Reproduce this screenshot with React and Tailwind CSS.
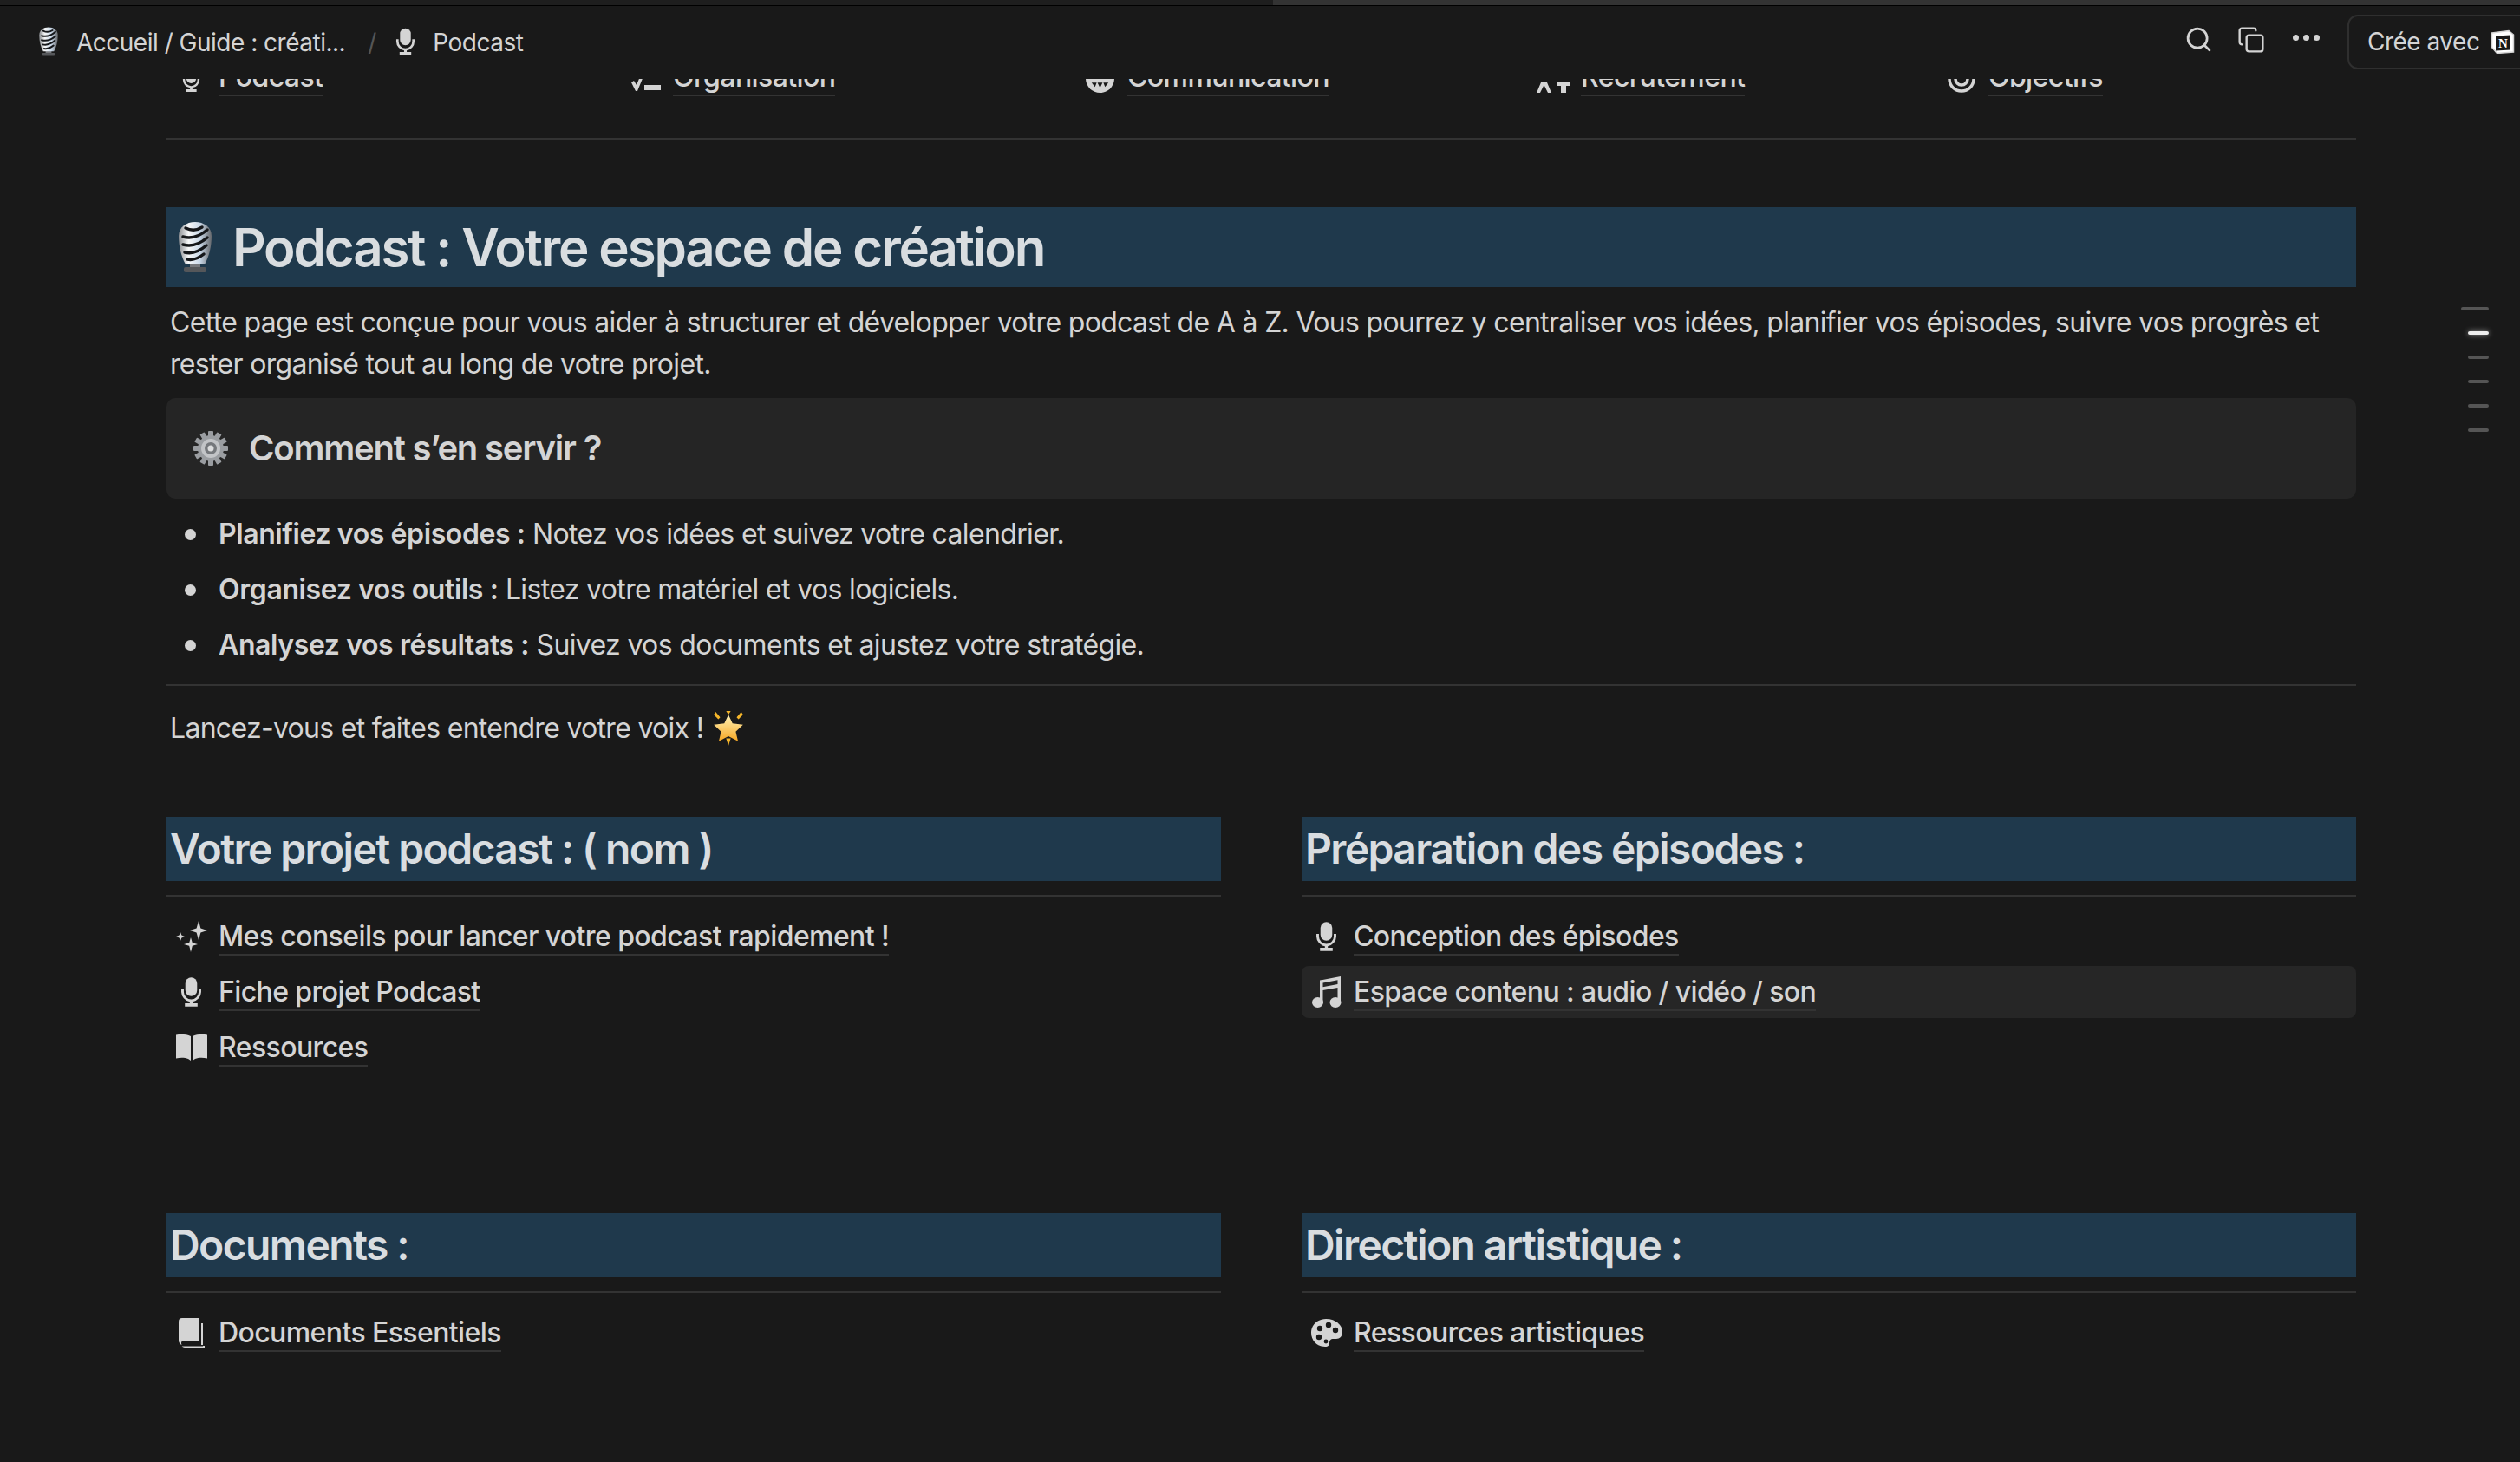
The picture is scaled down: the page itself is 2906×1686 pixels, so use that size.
import { Search, Copy } from 'lucide-react';

const MicIcon = ({ className }) => (
  <svg viewBox="0 0 24 32" className={className} fill="currentColor">
    <rect x="5.500" y="0" width="13" height="20.500" rx="6.500" />
    <path d="M1 13h2.800v3a8.200 8.200 0 0 0 16.400 0v-3H23v3a11 11 0 0 1-9.400 10.700V28.500H19V32H5v-3.500h5.400v-1.800A11 11 0 0 1 1 16z" />
  </svg>
);

const SparkIcon = ({ className }) => (
  <svg viewBox="0 0 36 36" className={className} fill="currentColor">
    <path d="M26 0l2.400 8.600L36 11l-7.600 2.400L26 22l-2.400-8.600L16 11l7.600-2.400z" />
    <path d="M5 13l1.400 3.600L10 18l-3.600 1.400L5 23l-1.400-3.600L0 18l3.600-1.400z" />
    <path d="M17 19l1.800 6.200L25 27l-6.200 1.800L17 36l-1.800-7.200L9 27l6.200-1.800z" />
  </svg>
);

const BookIcon = ({ className }) => (
  <svg viewBox="0 0 36 32" className={className} fill="currentColor">
    <path d="M0 1.500C5 0 12 .5 17 3v28l-3-2c-4-1.500-9-1.500-14-.5z" />
    <path d="M36 1.500C31 0 24 .5 19 3v28l3-2c4-1.500 9-1.500 14-.5z" />
  </svg>
);

const MusicIcon = ({ className }) => (
  <svg viewBox="0 0 34 36" className={className} fill="currentColor">
    <path d="M9 4.500 33 0v29h-3.500V13L12.500 16v15H9zM12.500 7.500v4.800L29.500 9V4.300z" fillRule="evenodd" />
    <ellipse cx="6.500" cy="30" rx="6.500" ry="6" />
    <ellipse cx="27" cy="30" rx="6.500" ry="6" />
  </svg>
);

const DocsIcon = ({ className }) => (
  <svg viewBox="0 0 30 34" className={className} fill="currentColor">
    <path d="M0 4a4 4 0 0 1 4-4h19v26H6a3 3 0 0 0-3 3c0 .8.200 1.500.600 2A6 6 0 0 1 0 26z" />
    <path d="M26 6h2v26h2v2H7a5 5 0 0 1-3.400-1.500H28V31H26z" />
  </svg>
);

const PaletteIcon = ({ className }) => (
  <svg viewBox="0 0 36 32" className={className}>
    <path d="M17 0C7 0 0 7 0 16s7 16 16 16c4 0 5-2 5-4 0-3 1-5 5-5h3c4 0 7-3 7-8C36 7 28 0 17 0z" fill="currentColor" />
    <circle cx="10" cy="11" r="3.200" fill="#191919" />
    <circle cx="20" cy="7" r="3.200" fill="#191919" />
    <circle cx="28" cy="13" r="3.200" fill="#191919" />
    <circle cx="9" cy="21" r="3.200" fill="#191919" />
    <circle cx="17" cy="26" r="2.400" fill="#191919" />
  </svg>
);

const ChecklistIcon = ({ className }) => (
  <svg viewBox="0 0 34 26" className={className} fill="currentColor">
    <path d="M0 14l3-2 3 5 5-12 3 2-7 17H5z" />
    <rect x="15" y="17" width="19" height="6" />
  </svg>
);

const GlobeIcon = ({ className }) => (
  <svg viewBox="0 0 34 34" className={className}>
    <circle cx="17" cy="17" r="17" fill="currentColor" />
    <path d="M7 22h6l-2 5zM14 22h6l-3 6zM21 22h6l-4 5z" fill="#191919" />
  </svg>
);

const PeopleIcon = ({ className }) => (
  <svg viewBox="0 0 40 34" className={className} fill="currentColor">
    <path d="M5 22h7l5 12h-4l-4.500-9L4 34H0z" />
    <path d="M24 22h14v4h-4v8h-6v-8h-4z" />
  </svg>
);

const TargetIcon = ({ className }) => (
  <svg viewBox="0 0 32 32" className={className} fill="none" stroke="currentColor" strokeWidth="3.500">
    <circle cx="16" cy="16" r="14" />
    <circle cx="16" cy="16" r="7" />
  </svg>
);

const NotionLogo = ({ className }) => (
  <svg viewBox="0 0 28 28" className={className}>
    <path d="M1.500 4 21 1.500 26.500 6v20l-19 1.500-6-7z" fill="#fff" stroke="#d4d4d4" strokeWidth="1.500" />
    <path d="M6 7.500 23 6.500V23.500L6 24.500z" fill="#191919" />
    <text x="14.500" y="21" textAnchor="middle" fontSize="15" fontWeight="700" fontFamily="Liberation Serif, serif" fill="#fff">N</text>
  </svg>
);

const MicEmoji = ({ className }) => (
  <svg viewBox="0 0 42 60" className={className}>
    <defs>
      <linearGradient id="metal" x1="0" x2="1" y1="0" y2="0">
        <stop offset="0" stopColor="#8a8d91" />
        <stop offset="0.3" stopColor="#f7f8f9" />
        <stop offset="0.65" stopColor="#c9d8e8" />
        <stop offset="1" stopColor="#64676b" />
      </linearGradient>
    </defs>
    <rect x="15" y="48" width="12" height="6" fill="#77797d" />
    <rect x="8" y="53" width="26" height="6" rx="2" fill="#55575a" />
    <path d="M21 1C31 1 40 7 40 17c0 12-3 24-8 33H10C5 41 2 29 2 17 2 7 11 1 21 1z" fill="url(#metal)" />
    <path d="M10 8q10 5 19-1M7 18q14 4 28-8M7 27q14 4 28-8M9 36q12 3 25-8M12 44q9 2 19-6" stroke="#15171a" strokeWidth="3.500" fill="none" strokeLinecap="round" />
  </svg>
);

const GearEmoji = ({ className }) => (
  <svg viewBox="0 0 40 40" className={className}>
    <g fill="#9a9da1">
      <circle cx="20" cy="20" r="15" />
      {[0, 30, 60, 90, 120, 150].map(a => (
        <rect key={a} x="17" y="0" width="6" height="40" rx="1" transform={`rotate(${a} 20 20)`} />
      ))}
    </g>
    <circle cx="20" cy="20" r="11" fill="#c2c4c7" />
    <circle cx="20" cy="20" r="7" fill="#75787c" />
    <circle cx="20" cy="20" r="3.500" fill="#dcddde" />
  </svg>
);

const StarEmoji = ({ className }) => (
  <svg viewBox="0 0 36 38" className={className}>
    <defs>
      <linearGradient id="star" x1="0" x2="0" y1="0" y2="1">
        <stop offset="0" stopColor="#fff3b8" />
        <stop offset="1" stopColor="#f6a723" />
      </linearGradient>
    </defs>
    <path d="M18 4l4.500 9.500L34 15l-8 7.500L28.500 33 18 27.500 7.500 33 10 22.500 2 15l11.500-1.500z" fill="url(#star)" />
    <path d="M4 1l5 6-2 2-5-5zM32 1l-5 6 2 2 5-5zM15.500 30h5L18 38z" fill="#f5b62a" />
    <path d="M15.500 0h5L18 4z" fill="#f5b62a" />
  </svg>
);

function Header() {
  return (
    <div className="flex items-center h-[82px] shrink-0 pl-[43px] text-[#d4d4d4]">
      <MicEmoji className="w-[26px] h-[34px]" />
      <span className="ml-[19px] mt-[2px] text-[28px] tracking-[-0.5px]">Accueil / Guide : créati...</span>
      <span className="ml-[26px] mt-[2px] text-[28px] text-[#555]">/</span>
      <MicIcon className="ml-[22px] w-[23px] h-[32px]" />
      <span className="ml-[20px] mt-[2px] text-[28px] tracking-[-0.5px]">Podcast</span>
      <div className="ml-auto flex items-center">
        <Search className="w-[33px] h-[33px] -mt-[6px]" strokeWidth={2} />
        <Copy className="ml-[28px] w-[32px] h-[32px] -mt-[4px]" strokeWidth={1.8} />
        <div className="ml-[32px] -mt-[10px] flex gap-[5px]">
          <span className="w-[7px] h-[7px] rounded-full bg-[#d4d4d4]" />
          <span className="w-[7px] h-[7px] rounded-full bg-[#d4d4d4]" />
          <span className="w-[7px] h-[7px] rounded-full bg-[#d4d4d4]" />
        </div>
        <div className="ml-[32px] -mr-[20px] flex items-center gap-[13px] w-[219px] h-[63px] pl-[21px] rounded-[12px] border-2 border-[#2f2f2f]">
          <span className="text-[28px] tracking-[-0.5px] whitespace-nowrap">Crée avec</span>
          <NotionLogo className="w-[28px] h-[28px] shrink-0" />
        </div>
      </div>
    </div>
  );
}

const TOP_LINKS = [
  { label: 'Podcast', Icon: MicIcon, icon: 'w-[21px] h-[30px]', width: 'w-[524px]' },
  { label: 'Organisation', Icon: ChecklistIcon, icon: 'w-[34px] h-[26px]', width: 'w-[524px]' },
  { label: 'Communication', Icon: GlobeIcon, icon: 'w-[33px] h-[33px]', width: 'w-[523px]' },
  { label: 'Recrutement', Icon: PeopleIcon, icon: 'w-[40px] h-[34px]', width: 'w-[470px]' },
  { label: 'Objectifs', Icon: TargetIcon, icon: 'w-[32px] h-[32px]', width: 'w-[300px]' },
];

function TopLinks() {
  return (
    <div className="flex h-[20px] mt-[2px] overflow-hidden items-end">
      {TOP_LINKS.map(({ label, Icon, icon, width }) => (
        <div key={label} className={`flex shrink-0 items-end ${width}`}>
          <div className="flex justify-center w-[60px] pb-[4px] pr-[3px]">
            <Icon className={icon} />
          </div>
          <span className="leading-[40px] text-[32px] font-medium tracking-[-0.6px] border-b-2 border-[#333]">{label}</span>
        </div>
      ))}
    </div>
  );
}

function LinkRow({ Icon, icon, label, active }) {
  return (
    <div className={`flex h-[60px] rounded-[8px] ${active ? 'bg-[#262626]' : ''}`}>
      <div className="flex items-center justify-center w-[60px] pr-[3px]">
        <Icon className={icon} />
      </div>
      <div className="pt-[10px]">
        <span className="block leading-[40px] text-[32px] font-medium tracking-[-0.6px] border-b-2 border-[#333]">{label}</span>
      </div>
    </div>
  );
}

function Column({ title, links }) {
  return (
    <div className="min-w-0">
      <h2 className="h-[74px] pl-[4px] bg-[#1f394c] text-[#d9dde0] text-[48px] leading-[74px] font-semibold tracking-[-1.6px]">{title}</h2>
      <div className="h-[2px] mt-[16px] bg-[#333]" />
      <div className="mt-[16px] flex flex-col gap-[4px]">
        {links.map(l => <LinkRow key={l.label} {...l} />)}
      </div>
    </div>
  );
}

const BULLETS = [
  ['Planifiez vos épisodes :', 'Notez vos idées et suivez votre calendrier.'],
  ['Organisez vos outils :', 'Listez votre matériel et vos logiciels.'],
  ['Analysez vos résultats :', 'Suivez vos documents et ajustez votre stratégie.'],
];

export default function App() {
  return (
    <div className="relative h-[1686px] w-full overflow-hidden bg-[#191919] text-[#d4d4d4] font-['Inter',sans-serif] flex flex-col">
      <div className="flex h-[7px] shrink-0 border-b border-black">
        <div className="w-[1468px] bg-[#1e1e1e]" />
        <div className="flex-1 bg-[#333]" />
      </div>
      <Header />

      <div className="ml-[192px] w-[2525px]">
        <TopLinks />
        <div className="h-[2px] mt-[48px] bg-[#333]" />

        <h1 className="flex items-center h-[92px] mt-[78px] bg-[#1f394c] text-[#d9dde0] text-[60px] font-semibold tracking-[-2.15px] pl-[8px]">
          <MicEmoji className="w-[50px] h-[60px]" />
          <span className="ml-[18px]">Podcast : Votre espace de création</span>
        </h1>

        <p className="mt-[17px] pl-[4px] text-[32px] leading-[48px] tracking-[-0.68px]">
          Cette page est conçue pour vous aider à structurer et développer votre podcast de A à Z. Vous pourrez y centraliser vos idées, planifier vos épisodes, suivre vos progrès et rester organisé tout au long de votre projet.
        </p>

        <div className="flex items-center h-[116px] mt-[15px] pl-[31px] rounded-[10px] bg-[#252525]">
          <GearEmoji className="w-[40px] h-[40px]" />
          <h3 className="ml-[24px] text-[40px] font-semibold tracking-[-1.2px]">Comment s’en servir ?</h3>
        </div>

        <ul className="mt-[17px] flex flex-col gap-[16px]">
          {BULLETS.map(([b, rest]) => (
            <li key={b} className="flex items-center h-[48px] text-[32px] tracking-[-0.65px]">
              <span className="ml-[21px] w-[13px] h-[13px] rounded-full bg-[#d4d4d4]" />
              <span className="ml-[26px]"><b className="font-semibold tracking-[-0.4px]">{b}</b> {rest}</span>
            </li>
          ))}
        </ul>

        <div className="h-[2px] mt-[21px] bg-[#333]" />

        <p className="flex items-center mt-[25px] pl-[4px] text-[32px] leading-[48px] tracking-[-0.7px]">
          Lancez-vous et faites entendre votre voix !
          <StarEmoji className="ml-[10px] w-[38px] h-[40px]" />
        </p>

        <div className="grid grid-cols-2 gap-x-[93px] mt-[78px]">
          <Column
            title="Votre projet podcast : ( nom )"
            links={[
              { label: 'Mes conseils pour lancer votre podcast rapidement !', Icon: SparkIcon, icon: 'w-[36px] h-[36px]' },
              { label: 'Fiche projet Podcast', Icon: MicIcon, icon: 'w-[25px] h-[34px]' },
              { label: 'Ressources', Icon: BookIcon, icon: 'w-[36px] h-[32px]' },
            ]}
          />
          <Column
            title="Préparation des épisodes :"
            links={[
              { label: 'Conception des épisodes', Icon: MicIcon, icon: 'w-[25px] h-[34px]' },
              { label: 'Espace contenu : audio / vidéo / son', Icon: MusicIcon, icon: 'w-[34px] h-[36px]', active: true },
            ]}
          />
        </div>

        <div className="grid grid-cols-2 gap-x-[93px] mt-[161px]">
          <Column
            title="Documents :"
            links={[{ label: 'Documents Essentiels', Icon: DocsIcon, icon: 'w-[30px] h-[34px]' }]}
          />
          <Column
            title="Direction artistique :"
            links={[{ label: 'Ressources artistiques', Icon: PaletteIcon, icon: 'w-[36px] h-[32px]' }]}
          />
        </div>
      </div>

      {/* table of contents ticks */}
      <div className="absolute top-[354px] right-[36px] flex flex-col items-end gap-[24px]">
        <span className="w-[32px] h-[4px] rounded-full bg-[#555]" />
        <span className="w-[24px] h-[4px] rounded-full bg-[#eee] shadow-[0_0_6px_rgba(255,255,255,0.6)]" />
        <span className="w-[24px] h-[4px] rounded-full bg-[#555]" />
        <span className="w-[24px] h-[4px] rounded-full bg-[#555]" />
        <span className="w-[24px] h-[4px] rounded-full bg-[#555]" />
        <span className="w-[24px] h-[4px] rounded-full bg-[#555]" />
      </div>
    </div>
  );
}
